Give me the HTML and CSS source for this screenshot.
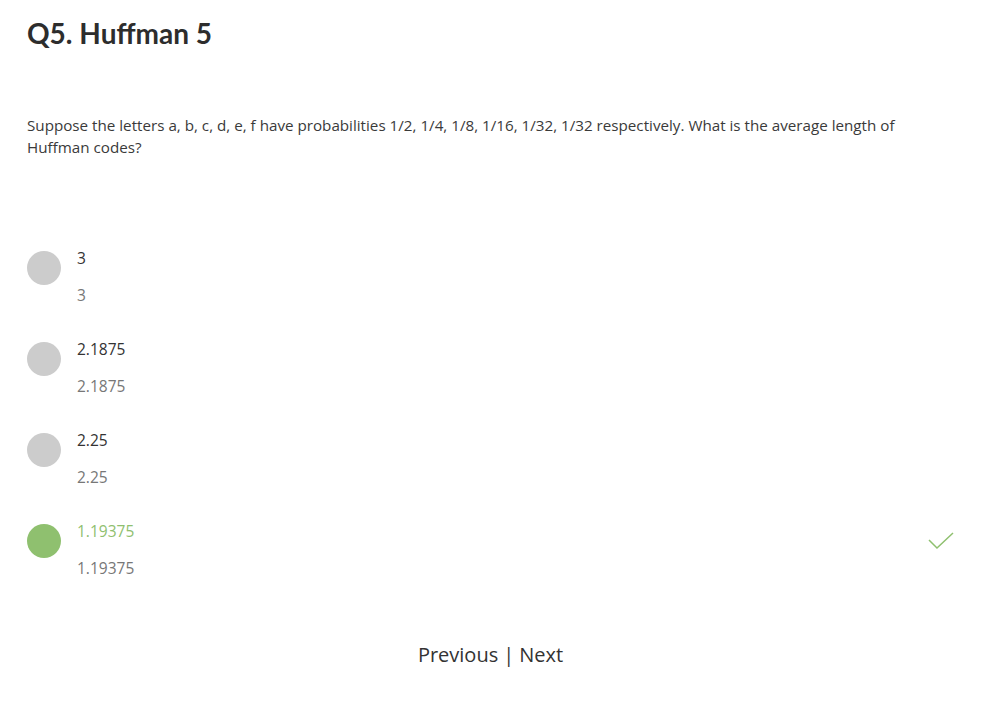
FILE: index.html
```html
<!DOCTYPE html>
<html>
<head>
<meta charset="utf-8">
<link rel="stylesheet" href="styles.css">
</head>
<body>
<div class="page">
  <h1 class="title">Q5. Huffman 5</h1>
  <p class="question">Suppose the letters a, b, c, d, e, f have probabilities 1/2, 1/4, 1/8, 1/16, 1/32, 1/32 respectively. What is the average length of Huffman codes?</p>
  <div class="options">
    <div class="option">
      <span class="dot"></span>
      <div class="texts"><div class="label">3</div><div class="answer">3</div></div>
    </div>
    <div class="option">
      <span class="dot"></span>
      <div class="texts"><div class="label">2.1875</div><div class="answer">2.1875</div></div>
    </div>
    <div class="option">
      <span class="dot"></span>
      <div class="texts"><div class="label">2.25</div><div class="answer">2.25</div></div>
    </div>
    <div class="option correct">
      <span class="dot"></span>
      <div class="texts"><div class="label">1.19375</div><div class="answer">1.19375</div></div>
      <svg class="check" width="26" height="20" viewBox="0 0 26 20"><path d="M1 9 L9 17 L25 2" fill="none" stroke="#8fc06f" stroke-width="1.5"/></svg>
    </div>
  </div>
  <div class="nav"><span>Previous</span><span class="sep">|</span><span>Next</span></div>
</div>
</body>
</html>
```
FILE: styles.css
```css
html, body { margin: 0; padding: 0; background: #fff; }
body { font-family: "Open Sans", "Noto Sans", sans-serif; color: #333; }
.page { padding: 14px 32px 0 27px; }
.title { margin: 0; font-family: "Lato", sans-serif; font-size: 28px; font-weight: 700; line-height: 38px; color: #2d2d2d; }
.question { margin: 62px 0 0; font-size: 15.2px; line-height: 22px; color: #3a3a3a; }
.options { margin-top: 89px; display: flex; flex-direction: column; gap: 32px; }
.option { display: flex; align-items: flex-start; gap: 16px; }
.dot { width: 34px; height: 34px; border-radius: 50%; background: #cccccc; flex: none; margin-top: 4px; }
.correct .dot { background: #8fc06f; }
.texts { flex: 1; font-size: 15.5px; line-height: 22px; }
.label { color: #333; }
.answer { color: #777; margin-top: 15px; }
.correct .label { color: #8fc06f; }
.check { margin-top: 11px; margin-right: 0; }
.nav { margin-top: 62px; display: flex; justify-content: center; gap: 5px; font-size: 20px; color: #333; }
```
